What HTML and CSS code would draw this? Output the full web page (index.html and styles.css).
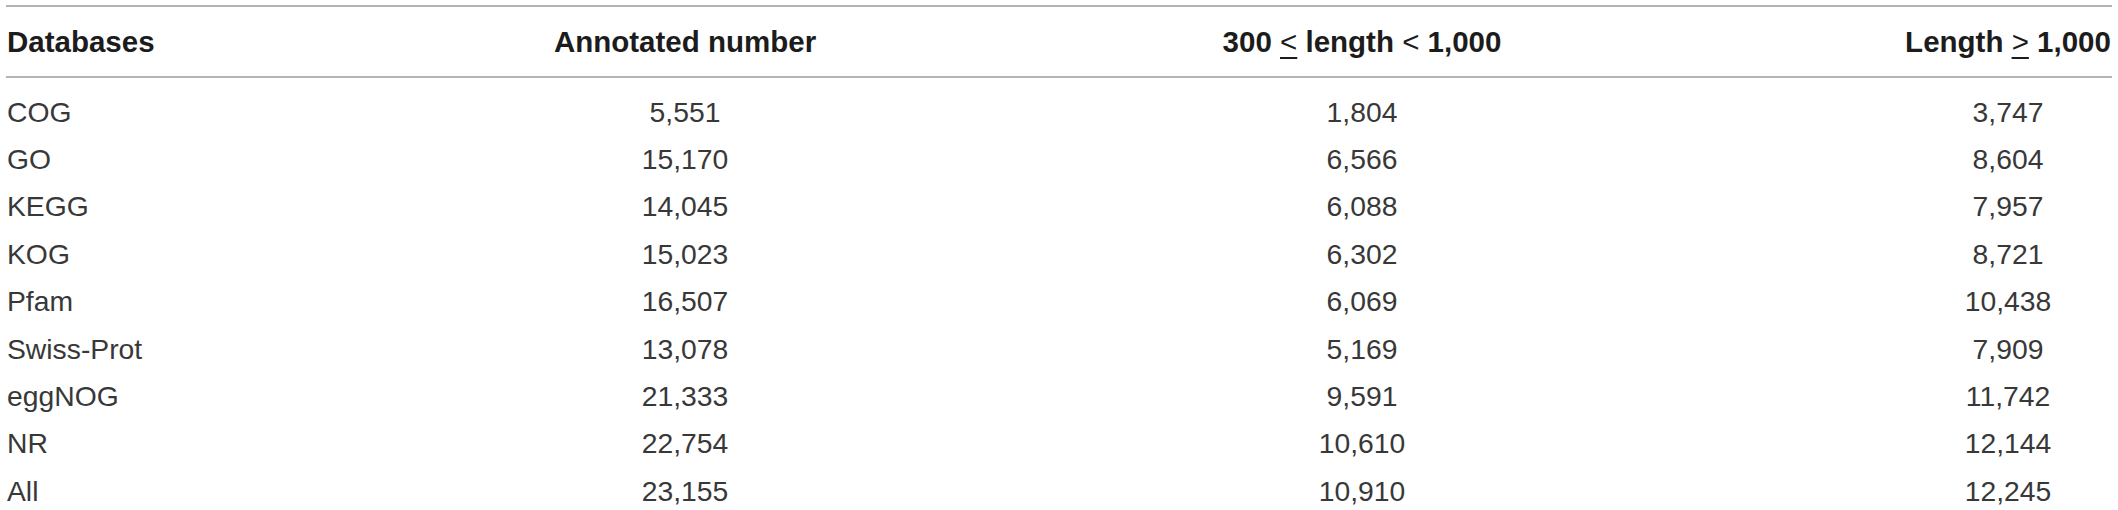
FILE: index.html
```html
<!DOCTYPE html>
<html lang="en">
<head>
    <meta charset="UTF-8">
    <title>Annotation statistics</title>
    <link rel="stylesheet" href="styles.css">
</head>
<body>

    <table class="stats">
        <colgroup>
            <col class="col-db">
            <col class="col-num">
            <col class="col-mid">
            <col class="col-long">
        </colgroup>
        <thead>
            <tr>
                <th>Databases</th>
                <th>Annotated number</th>
                <th>300 <span class="ul">&lt;</span> length <span class="sign">&lt;</span> 1,000</th>
                <th>Length <span class="ul">&gt;</span> 1,000</th>
            </tr>
        </thead>
        <tbody>
            <tr><td>COG</td><td>5,551</td><td>1,804</td><td>3,747</td></tr>
            <tr><td>GO</td><td>15,170</td><td>6,566</td><td>8,604</td></tr>
            <tr><td>KEGG</td><td>14,045</td><td>6,088</td><td>7,957</td></tr>
            <tr><td>KOG</td><td>15,023</td><td>6,302</td><td>8,721</td></tr>
            <tr><td>Pfam</td><td>16,507</td><td>6,069</td><td>10,438</td></tr>
            <tr><td>Swiss-Prot</td><td>13,078</td><td>5,169</td><td>7,909</td></tr>
            <tr><td>eggNOG</td><td>21,333</td><td>9,591</td><td>11,742</td></tr>
            <tr><td>NR</td><td>22,754</td><td>10,610</td><td>12,144</td></tr>
            <tr><td>All</td><td>23,155</td><td>10,910</td><td>12,245</td></tr>
        </tbody>
    </table>

</body>
</html>
```

FILE: styles.css
```css
body {
    margin: 0;
    background-color: #fff;
    font-family: 'Liberation Sans', Arial, sans-serif;
}

.stats {
    margin: 5px 0 0 6px;
    width: 2106px;
    table-layout: fixed;
    border-collapse: separate;
    border-spacing: 0;
    border-top: 2px solid #b4b4b4;
}

.col-db { width: 544px; }
.col-num { width: 270px; }
.col-mid { width: 1084px; }
.col-long { width: 208px; }

th, td {
    padding: 0;
    text-align: center;
    white-space: nowrap;
}

th:first-child, td:first-child {
    text-align: left;
    padding-left: 1px;
}

th {
    font-size: 29.5px;
    font-weight: bold;
    line-height: 69px;
    color: #1c1c1c;
    border-bottom: 2px solid #b4b4b4;
}

/* the comparison signs are set lighter than the heading text */
.sign, .ul {
    font-weight: normal;
}

/* underlined < and > stand for the "or equal" signs */
.ul {
    text-decoration: underline;
    text-decoration-thickness: 2px;
    text-underline-offset: 5px;
}

td {
    font-size: 28.3px;
    line-height: 47.4px;
    color: #383838;
}

tbody tr:first-child td {
    padding-top: 10.5px;
}
```
